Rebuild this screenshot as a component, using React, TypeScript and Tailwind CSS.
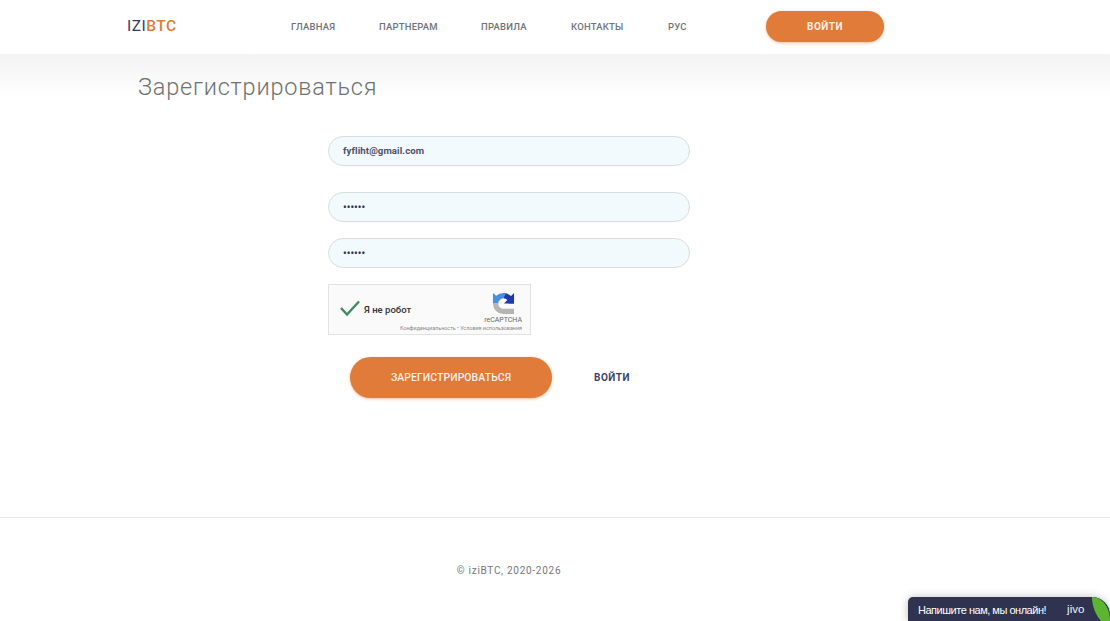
import React from 'react';

const navItems = [
  { label: 'ГЛАВНАЯ', width: 'w-[88px]' },
  { label: 'ПАРТНЕРАМ', width: 'w-[102px]' },
  { label: 'ПРАВИЛА', width: 'w-[90px]' },
  { label: 'КОНТАКТЫ', width: 'w-[97px]' },
  { label: 'РУС', width: 'w-[98px]' },
];

function RecaptchaLogo() {
  return (
    <svg width="23" height="23" viewBox="0 0 24 24" className="block">
      <path d="M12 1 A11 11 0 0 1 23 12 L17.5 12 A5.5 5.5 0 0 0 12 6.5 Z" fill="#1c3aa9" />
      <path d="M23 1 L23 12 L12.5 12 Z" fill="#1c3aa9" />
      <path d="M1 12 A11 11 0 0 1 12 1 L14.5 1.3 L12 6.5 A5.5 5.5 0 0 0 6.5 12 Z" fill="#4a90e2" />
      <path d="M1 1 L1 12 L9 8 Z" fill="#4a90e2" />
      <path d="M1 12 L6.5 12 A5.5 5.5 0 0 0 12 17.5 L23 17.5 L23 23 L12 23 A11 11 0 0 1 1 12 Z" fill="#b5b5b5" />
    </svg>
  );
}

function TextField({ value, dots }: { value: string; dots?: boolean }) {
  return (
    <div className="h-[30px] rounded-full border border-[#d9dddd] bg-[#f3fafe] pl-[14px] flex items-center">
      <span
        className={
          dots
            ? 'text-[10px] font-bold text-[#2f3551] tracking-[0.1px]'
            : 'text-[9.6px] font-bold text-[#4a5068] tracking-[0.1px]'
        }
      >
        {value}
      </span>
    </div>
  );
}

export default function App() {
  return (
    <div className="relative h-[621px] overflow-hidden bg-white font-['Roboto',sans-serif]">
      {/* Header */}
      <header className="h-[54px] bg-white flex items-center pl-[127px]">
        <div className="w-[164px] text-[15.5px] font-medium tracking-[0.5px] leading-none mb-[1px]">
          <span className="text-[#2f3a68] font-normal">IZI</span>
          <span className="text-[#e07b39]">BTC</span>
        </div>
        <nav className="flex items-center">
          {navItems.map((item) => (
            <span
              key={item.label}
              className={`${item.width} text-[9.5px] font-medium text-[#70747a] tracking-[0.2px]`}
            >
              {item.label}
            </span>
          ))}
        </nav>
        <button className="w-[118px] h-[31px] mb-[2px] rounded-full bg-[#e07b39] text-[10px] font-bold tracking-[0.5px] text-[#fbeee4] shadow-[0_1px_3px_rgba(224,123,57,0.5)]">
          ВОЙТИ
        </button>
      </header>

      {/* Main */}
      <main className="h-[464px] border-b border-[#e9e9e9] bg-gradient-to-b from-[#f3f3f3] via-white via-[45px] to-white">
        <h1 className="pl-[138px] pt-[15px] text-[23.5px] leading-[36px] font-light tracking-[0.8px] text-[#6f7270]">
          Зарегистрироваться
        </h1>

        <form className="ml-[328px] w-[362px] mt-[31px]">
          <TextField value="fyfliht@gmail.com" />
          <div className="mt-[26px]">
            <TextField value="••••••" dots />
          </div>
          <div className="mt-[16px]">
            <TextField value="••••••" dots />
          </div>

          {/* Captcha */}
          <div className="mt-[16px] w-[203px] h-[51px] border border-[#e2e2e2] bg-[#fafafa] flex">
            <svg width="20" height="17" viewBox="0 0 20 17" className="mt-[15px] ml-[11px] shrink-0">
              <path d="M1 8 L7 14.5 L19 1.5" fill="none" stroke="#3e8a65" strokeWidth="2.4" />
            </svg>
            <span className="ml-[4px] mt-[18px] text-[9.5px] leading-[14px] font-medium text-[#333] whitespace-nowrap">
              Я не робот
            </span>
            <div className="flex-1 flex flex-col items-end pr-[8px]">
              <div className="mt-[7px] mr-[7px]">
                <RecaptchaLogo />
              </div>
              <span className="mt-[1px] text-[7px] leading-[9px] text-[#666]">reCAPTCHA</span>
              <span className="text-[5.4px] leading-[7px] -ml-[40px] text-[#888] whitespace-nowrap">
                Конфиденциальность • Условия использования
              </span>
            </div>
          </div>

          <div className="mt-[22px] ml-[22px] flex items-center">
            <button
              type="button"
              className="w-[202px] h-[41px] rounded-full bg-[#e07b39] text-[10.4px] font-medium text-[#fbeee4] tracking-[0.1px] shadow-[0_1px_3px_rgba(224,123,57,0.5)]"
            >
              ЗАРЕГИСТРИРОВАТЬСЯ
            </button>
            <span className="ml-[42px] text-[10px] font-bold tracking-[0.5px] text-[#3d4468]">ВОЙТИ</span>
          </div>
        </form>
      </main>

      {/* Footer */}
      <footer className="pt-[46px] pr-[92px] text-center text-[10px] leading-[14px] tracking-[0.72px] text-[#75787b]">
        © iziBTC, 2020-2026
      </footer>

      {/* Chat widget */}
      <div className="absolute left-[908px] top-[597px] w-[202px] h-[24px] rounded-tl-[5px] rounded-tr-[18px] bg-[#2f3350] overflow-hidden shadow-[0_0_8px_rgba(0,0,0,0.25)] font-['Liberation_Sans',sans-serif] flex items-center pl-[10px] pt-[2px]">
        <span className="text-[11px] tracking-[-0.48px] text-white whitespace-nowrap">Напишите нам, мы онлайн!</span>
        <span className="ml-[21px] text-[11.5px] text-[#f2f2f2]">jivo</span>
        <svg width="18" height="24" viewBox="0 0 18 24" className="absolute left-[184px] top-0">
          <path d="M0 0 C10 0 18 10 18 24 L9 24 C3 17 0 8 0 0 Z" fill="#5cb531" />
        </svg>
      </div>
    </div>
  );
}
